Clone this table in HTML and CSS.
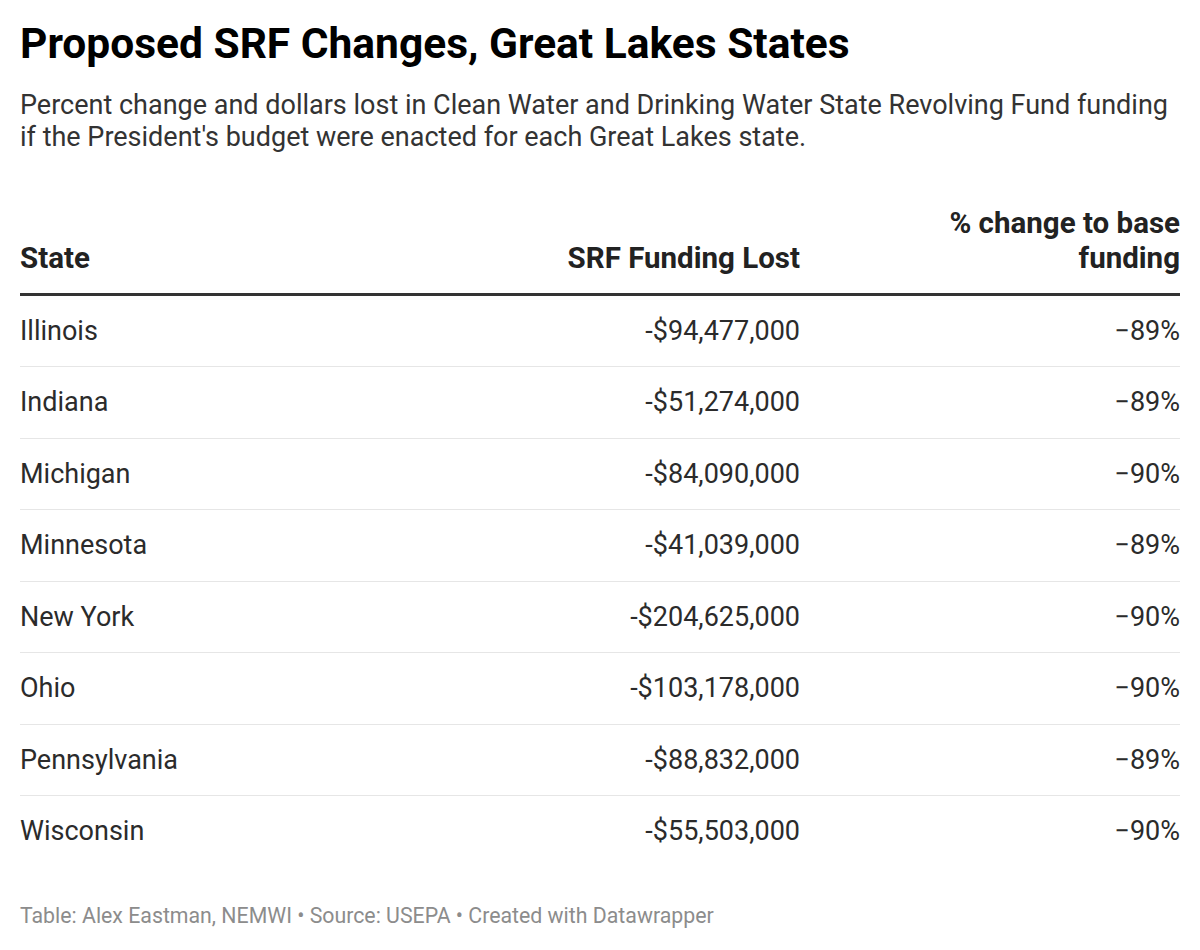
FILE: index.html
```html
<!DOCTYPE html>
<html lang="en">
<head>
<meta charset="utf-8">
<title>Proposed SRF Changes, Great Lakes States</title>
<link rel="stylesheet" href="styles.css">
</head>
<body>
<div class="chart">
  <h1 class="title">Proposed SRF Changes, Great Lakes States</h1>
  <p class="desc">Percent change and dollars lost in Clean Water and Drinking Water State Revolving Fund funding if the President's budget were enacted for each Great Lakes state.</p>
  <table class="data">
    <thead>
      <tr>
        <th class="c-state">State</th>
        <th class="c-num">SRF Funding Lost</th>
        <th class="c-pct"><span class="wrap-head">% change to base funding</span></th>
      </tr>
    </thead>
    <tbody>
      <tr><td class="c-state">Illinois</td><td class="c-num">-$94,477,000</td><td class="c-pct">−89%</td></tr>
      <tr><td class="c-state">Indiana</td><td class="c-num">-$51,274,000</td><td class="c-pct">−89%</td></tr>
      <tr><td class="c-state">Michigan</td><td class="c-num">-$84,090,000</td><td class="c-pct">−90%</td></tr>
      <tr><td class="c-state">Minnesota</td><td class="c-num">-$41,039,000</td><td class="c-pct">−89%</td></tr>
      <tr><td class="c-state">New York</td><td class="c-num">-$204,625,000</td><td class="c-pct">−90%</td></tr>
      <tr><td class="c-state">Ohio</td><td class="c-num">-$103,178,000</td><td class="c-pct">−90%</td></tr>
      <tr><td class="c-state">Pennsylvania</td><td class="c-num">-$88,832,000</td><td class="c-pct">−89%</td></tr>
      <tr><td class="c-state">Wisconsin</td><td class="c-num">-$55,503,000</td><td class="c-pct">−90%</td></tr>
    </tbody>
  </table>
  <p class="footer">Table: Alex Eastman, NEMWI • Source: USEPA • Created with Datawrapper</p>
</div>
</body>
</html>
```

FILE: styles.css
```css
html, body {
  margin: 0;
  padding: 0;
  background: #ffffff;
}

body {
  font-family: Roboto, "Liberation Sans", Arial, sans-serif;
  color: #333333;
}

.chart {
  padding: 20px 20px 0 20px;
}

.title {
  margin: 0;
  font-size: 42.5px;
  line-height: 48px;
  font-weight: 700;
  color: #000000;
}

.desc {
  margin: 21px 0 0 0;
  font-size: 27px;
  line-height: 32px;
  color: #333333;
}

.data {
  width: 100%;
  margin-top: 53px;
  border-collapse: collapse;
  font-size: 27px;
}

.data th {
  font-size: 29.5px;
  font-weight: 700;
  color: #222222;
  line-height: 35px;
  padding: 0 0 16.5px 0;
  vertical-align: bottom;
  border-bottom: 3px solid #333333;
}

.data td {
  line-height: 32px;
  padding: 19.25px 0;
  border-bottom: 1px solid #e6e6e6;
  color: #2b2b2b;
}

.data tbody tr:last-child td {
  border-bottom: none;
}

.c-state {
  text-align: left;
}

.c-num {
  text-align: right;
  width: 380px;
}

.c-pct {
  text-align: right;
  width: 380px;
}

.wrap-head {
  display: inline-block;
  max-width: 250px;
}

.footer {
  margin: 35.5px 0 0 0;
  font-size: 21.3px;
  line-height: 28px;
  color: #8c8c8c;
}
```
